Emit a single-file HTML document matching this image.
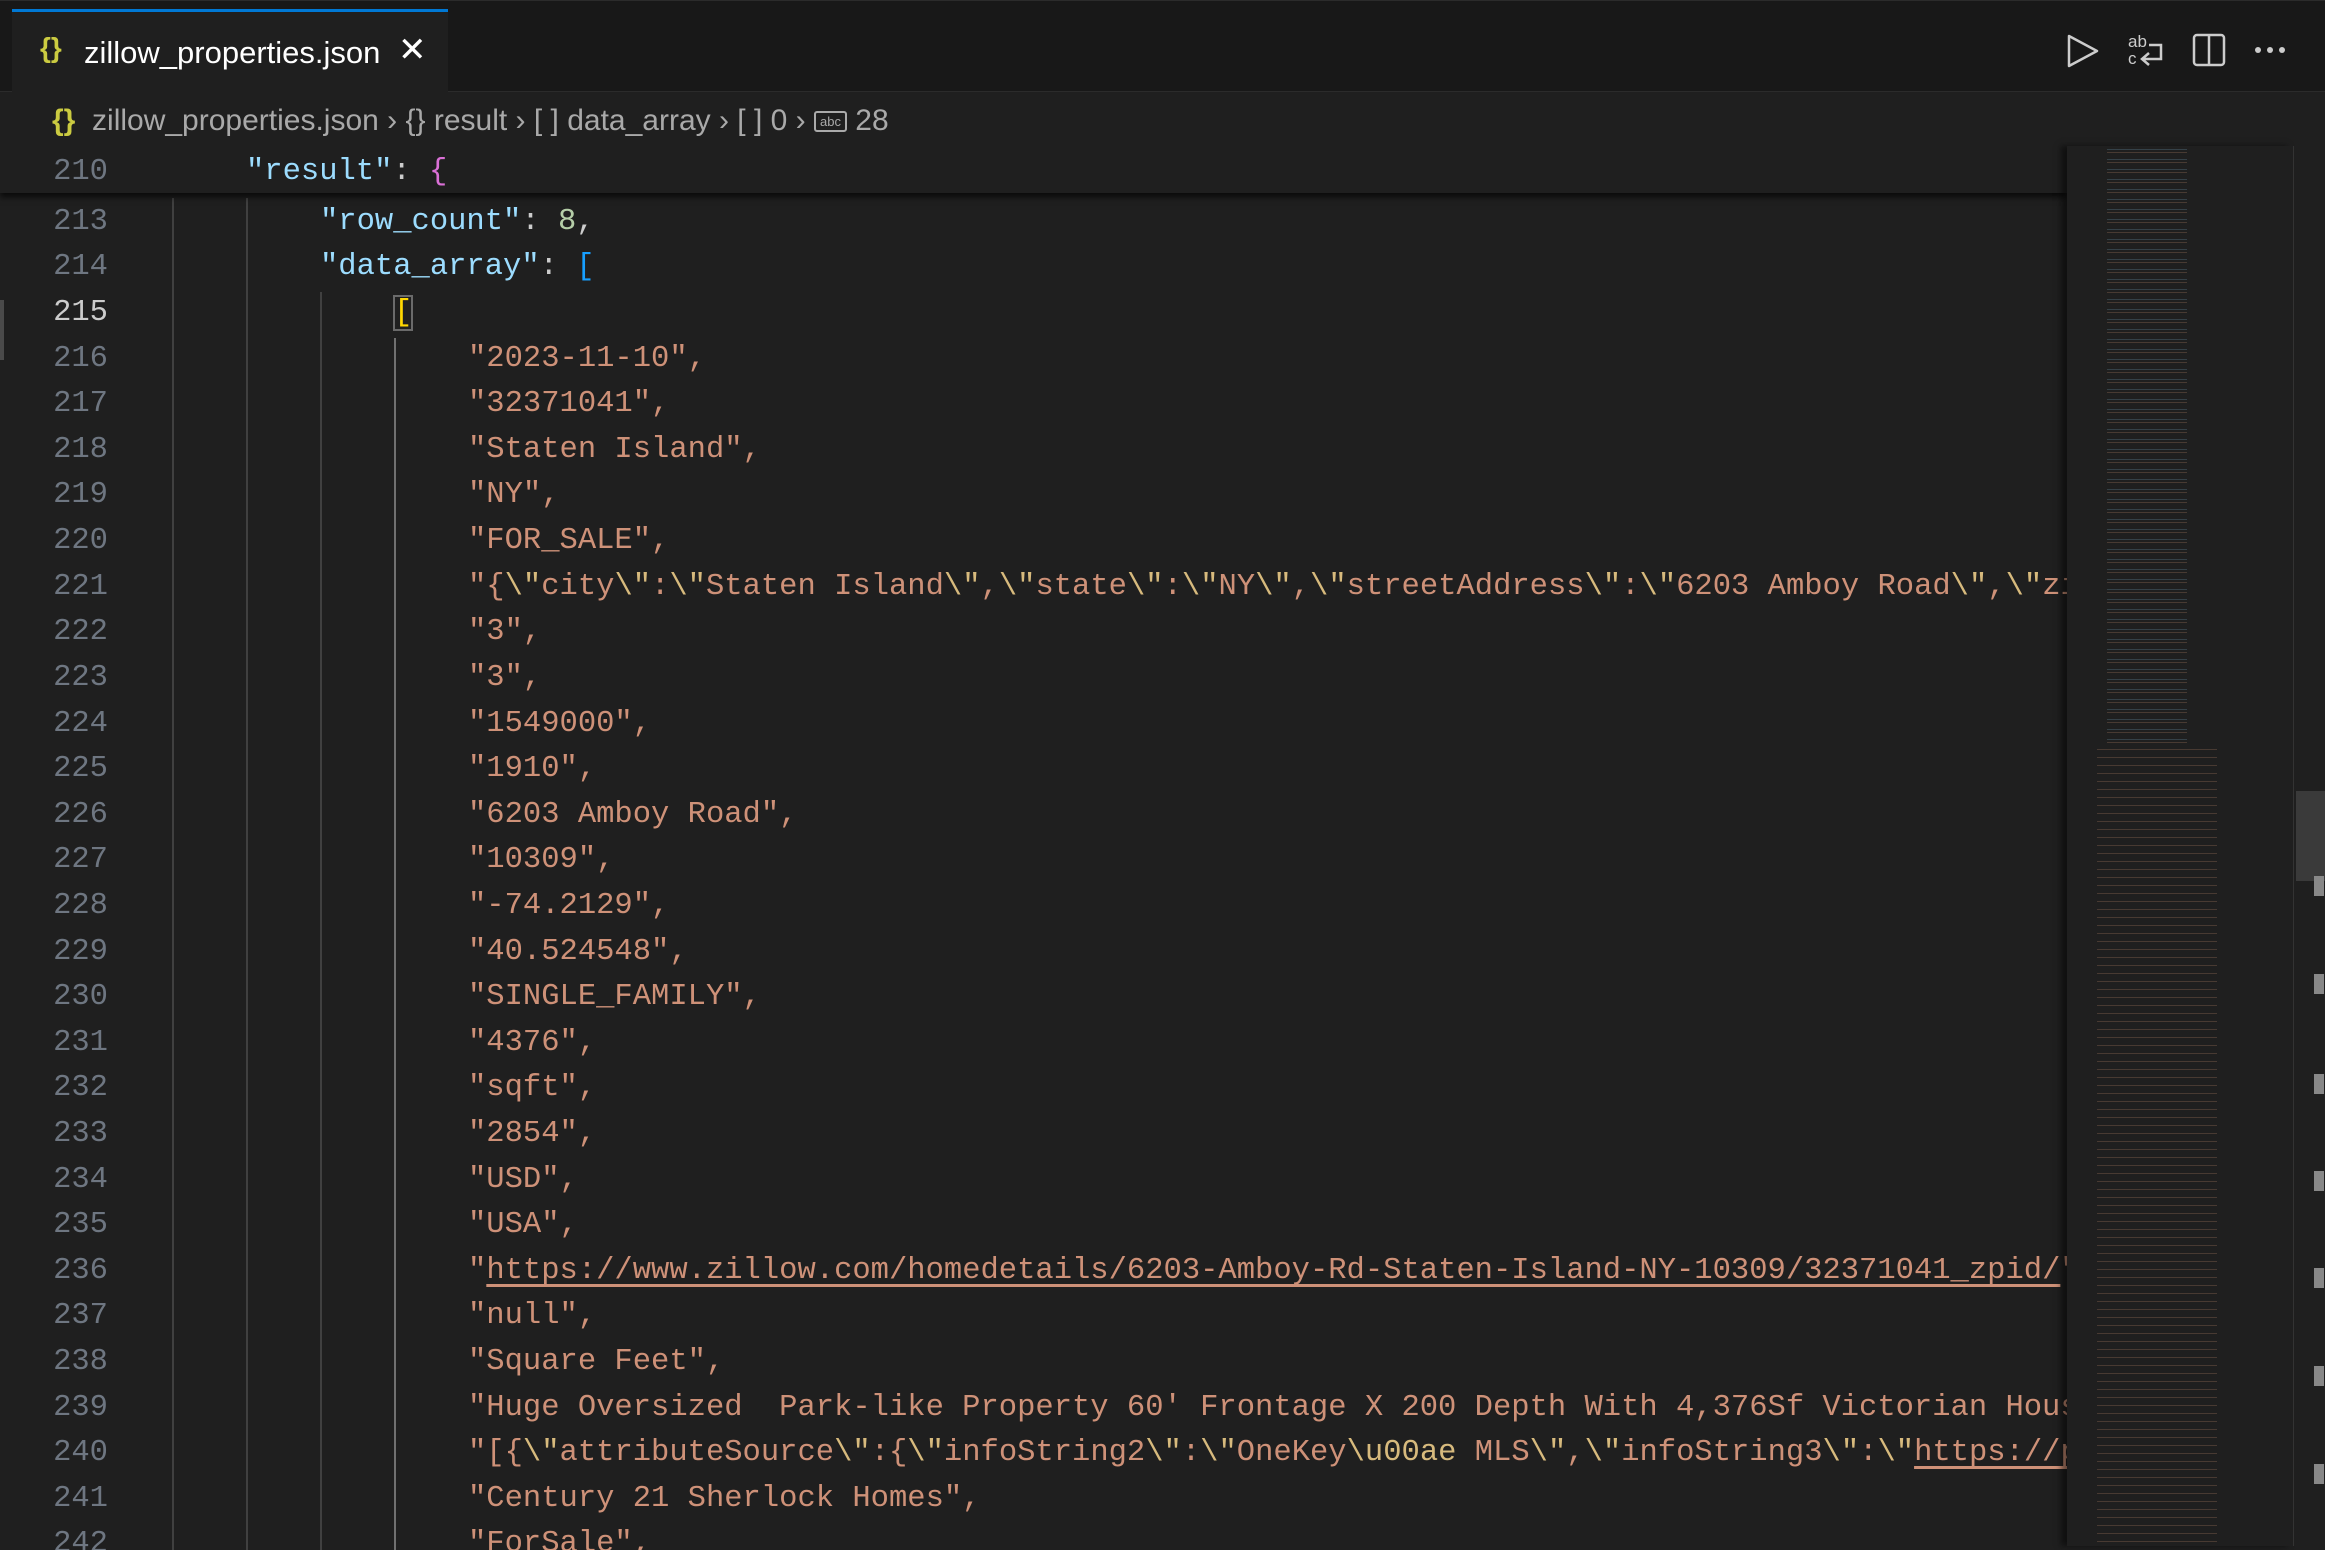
<!DOCTYPE html>
<html><head><meta charset="utf-8"><style>
body{margin:0;width:2325px;height:1546px;background:#1f1f1f;overflow:hidden;position:relative;font-family:"Liberation Sans",sans-serif}
#tabbar{position:absolute;left:0;top:0;width:2325px;height:92px;background:#181818;border-top:1px solid #2b2b2b;border-bottom:1px solid #2b2b2b;box-sizing:border-box}
#tab{position:absolute;left:12px;top:8px;width:436px;height:84px;background:#1f1f1f;border-top:3px solid #0078d4;box-sizing:border-box;color:#fff;font-size:31px}
#tab .b{position:absolute;left:28px;top:20px;color:#cbcb41;font-size:28px;font-weight:bold}
#tab .n{position:absolute;left:72px;top:23px}
#tab .x{position:absolute;left:386px;top:18px;font-size:34px}
#crumb{position:absolute;left:52px;top:104px;color:#a9a9a9;font-size:30px;white-space:nowrap}
#crumb .y{color:#cbcb41;font-weight:bold}
.ln{position:absolute;left:18px;color:#6e7681;font:30.5px "Liberation Mono",monospace;line-height:45px;text-align:right;width:90px}
.cd{position:absolute;font:30.5px "Liberation Mono",monospace;line-height:45px;white-space:pre;color:#ce9178}
.k{color:#9cdcfe}.s{color:#ce9178}.num{color:#b5cea8}.p{color:#cccccc}.pk{color:#da70d6}.bl{color:#179fff}
i{font-style:normal;color:#d7ba7d}
u{text-decoration:underline;text-underline-offset:6px}
.g{position:absolute;width:2px;background:#404040}
#clip{position:absolute;left:0;top:4px;width:2067px;height:1546px;overflow:hidden}
#mini{position:absolute;left:2067px;top:146px;width:226px;height:1400px;background:#1f1f1f;box-shadow:-6px 0 6px rgba(0,0,0,.5)}
#sb{position:absolute;left:2293px;top:146px;width:32px;height:1400px;background:#1f1f1f;border-left:1px solid #333}
</style></head><body>
<div id="clip">
<div class="g" style="left:172px;top:194px;height:1352px"></div>
<div class="g" style="left:246px;top:194px;height:1352px"></div>
<div class="g" style="left:320px;top:288px;height:1258px"></div>
<div class="g" style="left:394px;top:334px;height:1212px;background:#707070"></div>
<div style="position:absolute;left:0;top:296px;width:4px;height:60px;background:#4a4a4a"></div>

<div class="ln" style="top:196px">213</div><div class="cd" style="left:320px;top:196px"><span class="k">"row_count"</span><span class="p">: </span><span class="num">8</span><span class="p">,</span></div>
<div class="ln" style="top:241px">214</div><div class="cd" style="left:320px;top:241px"><span class="k">"data_array"</span><span class="p">: </span><span class="bl">[</span></div>
<div class="ln" style="top:287px;color:#ccc">215</div><div class="cd" style="left:394px;top:287px"><span style="color:#ffd700;outline:2px solid #6a6a6a;outline-offset:-1px">[</span></div>
<div class="ln" style="top:333px">216</div><div class="cd" style="left:468px;top:333px">"2023-11-10",</div>
<div class="ln" style="top:378px">217</div><div class="cd" style="left:468px;top:378px">"32371041",</div>
<div class="ln" style="top:424px">218</div><div class="cd" style="left:468px;top:424px">"Staten Island",</div>
<div class="ln" style="top:469px">219</div><div class="cd" style="left:468px;top:469px">"NY",</div>
<div class="ln" style="top:515px">220</div><div class="cd" style="left:468px;top:515px">"FOR_SALE",</div>
<div class="ln" style="top:561px">221</div><div class="cd" style="left:468px;top:561px">"{<i>\"</i>city<i>\"</i>:<i>\"</i>Staten Island<i>\"</i>,<i>\"</i>state<i>\"</i>:<i>\"</i>NY<i>\"</i>,<i>\"</i>streetAddress<i>\"</i>:<i>\"</i>6203 Amboy Road<i>\"</i>,<i>\"</i>zipcode<i>\"</i></div>
<div class="ln" style="top:606px">222</div><div class="cd" style="left:468px;top:606px">"3",</div>
<div class="ln" style="top:652px">223</div><div class="cd" style="left:468px;top:652px">"3",</div>
<div class="ln" style="top:698px">224</div><div class="cd" style="left:468px;top:698px">"1549000",</div>
<div class="ln" style="top:743px">225</div><div class="cd" style="left:468px;top:743px">"1910",</div>
<div class="ln" style="top:789px">226</div><div class="cd" style="left:468px;top:789px">"6203 Amboy Road",</div>
<div class="ln" style="top:834px">227</div><div class="cd" style="left:468px;top:834px">"10309",</div>
<div class="ln" style="top:880px">228</div><div class="cd" style="left:468px;top:880px">"-74.2129",</div>
<div class="ln" style="top:926px">229</div><div class="cd" style="left:468px;top:926px">"40.524548",</div>
<div class="ln" style="top:971px">230</div><div class="cd" style="left:468px;top:971px">"SINGLE_FAMILY",</div>
<div class="ln" style="top:1017px">231</div><div class="cd" style="left:468px;top:1017px">"4376",</div>
<div class="ln" style="top:1062px">232</div><div class="cd" style="left:468px;top:1062px">"sqft",</div>
<div class="ln" style="top:1108px">233</div><div class="cd" style="left:468px;top:1108px">"2854",</div>
<div class="ln" style="top:1154px">234</div><div class="cd" style="left:468px;top:1154px">"USD",</div>
<div class="ln" style="top:1199px">235</div><div class="cd" style="left:468px;top:1199px">"USA",</div>
<div class="ln" style="top:1245px">236</div><div class="cd" style="left:468px;top:1245px">"<u>https://www.zillow.com/homedetails/6203-Amboy-Rd-Staten-Island-NY-10309/32371041_zpid/</u>",</div>
<div class="ln" style="top:1290px">237</div><div class="cd" style="left:468px;top:1290px">"null",</div>
<div class="ln" style="top:1336px">238</div><div class="cd" style="left:468px;top:1336px">"Square Feet",</div>
<div class="ln" style="top:1382px">239</div><div class="cd" style="left:468px;top:1382px">"Huge Oversized  Park-like Property 60' Frontage X 200 Depth With 4,376Sf Victorian House",</div>
<div class="ln" style="top:1427px">240</div><div class="cd" style="left:468px;top:1427px">"[{<i>\"</i>attributeSource<i>\"</i>:{<i>\"</i>infoString2<i>\"</i>:<i>\"</i>OneKey<i>\u00ae</i> MLS<i>\"</i>,<i>\"</i>infoString3<i>\"</i>:<i>\"</i><u>https://photos</u></div>
<div class="ln" style="top:1473px">241</div><div class="cd" style="left:468px;top:1473px">"Century 21 Sherlock Homes",</div>
<div class="ln" style="top:1518px">242</div><div class="cd" style="left:468px;top:1518px">"ForSale",</div>

<div style="position:absolute;left:0;top:88px;width:2067px;height:101px;background:#1f1f1f;box-shadow:0 4px 6px rgba(0,0,0,.7)"></div>
<div class="ln" style="top:146px">210</div><div class="cd" style="left:246px;top:146px"><span class="k">"result"</span><span class="p">: </span><span class="pk">{</span></div>
</div>

<div id="mini">
<div style="position:absolute;left:40px;top:0;width:80px;height:600px;background:repeating-linear-gradient(#1f1f1f 0 3px,#4f6b7a 3px 4px,#1f1f1f 4px 6px,#7a5a4a 6px 7px,#1f1f1f 7px 10px);opacity:.45"></div>
<div style="position:absolute;left:30px;top:600px;width:120px;height:800px;background:repeating-linear-gradient(#1f1f1f 0 3px,#7a5a4a 3px 4px,#1f1f1f 4px 8px);opacity:.45"></div>
</div>
<div id="sb">
<div style="position:absolute;left:2px;top:645px;width:30px;height:90px;background:#3a3a3a"></div>
<div style="position:absolute;left:20px;top:730px;width:10px;height:20px;background:#888"></div>
<div style="position:absolute;left:20px;top:828px;width:10px;height:20px;background:#888"></div>
<div style="position:absolute;left:20px;top:928px;width:10px;height:20px;background:#888"></div>
<div style="position:absolute;left:20px;top:1025px;width:10px;height:20px;background:#888"></div>
<div style="position:absolute;left:20px;top:1122px;width:10px;height:20px;background:#888"></div>
<div style="position:absolute;left:20px;top:1220px;width:10px;height:20px;background:#888"></div>
<div style="position:absolute;left:20px;top:1318px;width:10px;height:20px;background:#888"></div>
</div>

<div id="tabbar">
<div id="tab"><span class="b">{}</span><span class="n">zillow_properties.json</span><span class="x">✕</span></div>
<svg style="position:absolute;left:2065px;top:32px" width="36" height="36" viewBox="0 0 36 36" fill="none" stroke="#ccc" stroke-width="2.5"><path d="M4 3 L32 18 L4 33 Z" stroke-linejoin="round"/></svg>
<svg style="position:absolute;left:2127px;top:32px" width="40" height="36" viewBox="0 0 40 36" fill="none" stroke="#ccc" stroke-width="2.5"><text x="1" y="14" fill="#ccc" stroke="none" font-size="17" font-family="Liberation Sans">ab</text><text x="1" y="31" fill="#ccc" stroke="none" font-size="17" font-family="Liberation Sans">c</text><path d="M22 12 H34 V26 H16 M22 20 L15 26 L22 32"/></svg>
<svg style="position:absolute;left:2192px;top:32px" width="34" height="34" viewBox="0 0 34 34" fill="none" stroke="#ccc" stroke-width="2.5"><rect x="2" y="2" width="30" height="30" rx="3"/><path d="M17 2 V32"/></svg>
<svg style="position:absolute;left:2254px;top:44px" width="32" height="10" viewBox="0 0 32 10" fill="#ccc"><circle cx="4" cy="5" r="3"/><circle cx="16" cy="5" r="3"/><circle cx="28" cy="5" r="3"/></svg>
</div>
<div id="crumb"><span class="y">{}</span>&nbsp; zillow_properties.json › {} result › [ ] data_array › [ ] 0 › <span style="display:inline-block;border:2px solid #aaa;border-radius:3px;font-size:13px;padding:1px 4px;vertical-align:4px">abc</span> 28</div>
</body></html>
